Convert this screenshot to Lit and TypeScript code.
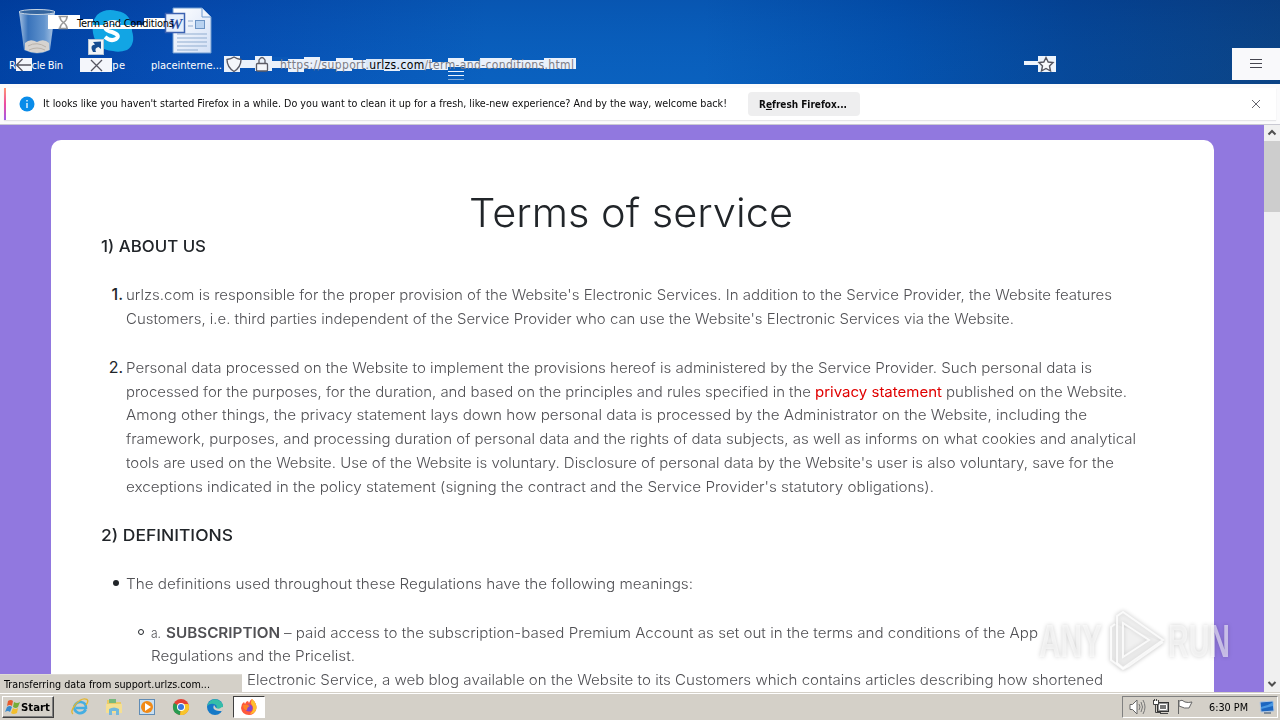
import { css, html, LitElement, svg } from "lit";
import { customElement, property } from "lit/decorators.js";

/** One line of text, stretched a little so that it fills the given width. */
@customElement("fit-line")
export class FitLine extends LitElement {
  @property({ type: Number })
  width = 0;

  firstUpdated() {
    const span = this.renderRoot.querySelector("span")!;
    const natural = span.getBoundingClientRect().width;
    if (this.width && natural) {
      span.style.transform = `scaleX(${this.width / natural})`;
    }
  }

  render() {
    return html`<span><slot></slot></span>`;
  }

  static styles = css`
    :host {
      display: block;
      flex: none;
      white-space: nowrap;
    }

    span {
      display: inline-block;
      vertical-align: top;
      transform-origin: 0 0;
    }
  `;
}

@customElement("desktop-strip")
export class DesktopStrip extends LitElement {
  render() {
    return html`
      <svg class="wall" width="1280" height="84" viewBox="0 0 1280 84">
        <defs>
          <linearGradient id="sky">
            <stop offset="0" stop-color="#003d9f" />
            <stop offset="0.13" stop-color="#0649b0" />
            <stop offset="0.38" stop-color="#0a5fbd" />
            <stop offset="0.55" stop-color="#0a5fbc" />
            <stop offset="0.7" stop-color="#0450ac" />
            <stop offset="0.84" stop-color="#064391" />
            <stop offset="1" stop-color="#0c3e7b" />
          </linearGradient>
          <linearGradient id="shade" x2="0" y2="1">
            <stop offset="0" stop-color="#003a90" stop-opacity="0.25" />
            <stop offset="1" stop-color="#0b6fd0" stop-opacity="0.12" />
          </linearGradient>
          <linearGradient id="glass">
            <stop offset="0" stop-color="#b8d0ea" />
            <stop offset="0.25" stop-color="#3e78bd" />
            <stop offset="0.7" stop-color="#6d9dd2" />
            <stop offset="1" stop-color="#c3d8ee" />
          </linearGradient>
          <linearGradient id="paper" x2="1" y2="1">
            <stop offset="0" stop-color="#ffffff" />
            <stop offset="1" stop-color="#d3e0f6" />
          </linearGradient>
        </defs>
        <rect width="1280" height="84" fill="url(#sky)" />
        <rect width="1280" height="84" fill="url(#shade)" />
        <path d="M19 12 L24 50 Q37 57 50 50 L55 12Z" fill="url(#glass)" opacity="0.9" />
        <path d="M25 43 Q30 38 37 42 Q44 38 49 43 L49 50 Q37 56 25 50Z" fill="#d6d3d0" />
        <path d="M28 46 Q37 41 46 47 M29 50 Q37 46 45 50" fill="none" stroke="#b9b2aa" />
        <ellipse cx="37" cy="12" rx="18" ry="2.5" fill="#34659f" stroke="#c9d7e5" />
        <path d="M97 15 Q105 8 117 11 Q132 13 132 31 Q136 44 127 50 Q119 53 113 51 Q96 50 93 33 Q91 22 97 15Z" fill="#12a5e4" />
        <path d="M120 24 Q113 20 107 24 Q102 30 112 32 Q121 35 116 39 Q111 42 105 37" fill="none" stroke="#fff" stroke-width="4" />
        <rect x="88.500" y="39.500" width="15" height="15" fill="#f2f5f8" stroke="#b8c6d5" />
        <path d="M93 52 Q89 45 95 44.500 L93 42 L101 41.500 L101 49 L98.500 47 Q94 48 96 52Z" fill="#174d91" />
        <path d="M173 8 H202 L211 17 V53 H173Z" fill="url(#paper)" stroke="#6e9bd0" />
        <path d="M202 8 V17 H211" fill="#edf3fc" stroke="#6e9bd0" />
        <path d="M188 21H193M188 26H193M177 34H207M177 38H207M177 42H207M177 46H207M177 50H198" stroke="#91add0" />
        <rect x="195.500" y="20.500" width="9" height="8" fill="#b8d2f0" stroke="#6c94c4" />
        <path d="M48 15H80V19H93V29H48ZM93 25H144V29H93ZM144 18H166V29H144Z" fill="#fff" />
        <rect x="165.500" y="13.500" width="19" height="19" fill="#e6effc" stroke="#3c62b1" stroke-width="1.500" />
        <text x="169" y="29" class="word">W</text>
        <path d="M58.500 16.500H68M58.500 28.500H68M60 17Q60 20 63.500 22.500Q60 25 60 28M67 17Q67 20 63.500 22.500Q67 25 67 28" fill="none" stroke="#999" stroke-width="1.500" />
        <text x="9" y="69" class="label" textLength="54">Recycle Bin</text>
        <text x="94" y="69" class="label" textLength="31">Skype</text>
        <text x="151" y="69" class="label" textLength="71">placeinterne...</text>
        <path d="M16 58H32V71H16ZM80 58H112V72H80Z" fill="#f4f6fb" />
        <path d="M31 65H17M22.500 59L16.500 65L22.500 71M91 60L102 71M102 60L91 71" fill="none" stroke="#555560" stroke-width="1.300" />
        <text x="77" y="27" class="tab" textLength="97">Term and Conditions</text>
        <path d="M224 56H240V60H255V56H272V61H288V59H304V57H320V61H336V58H353V60H370V61H384V60H415V59H432V62H448V58H464V61H480V58H512V60H544V58H576V69H544V68H464V67H448V70H432V69H415V68H400V71H384V69H352V71H336V69H304V72H288V68H272V71H255V68H240V72H224Z" fill="#eaf1fb" />
        <path d="M272 57H288V61H272ZM368 58H424V62H368ZM368 62H424V69H368Z" fill="#0a58b8" />
        <path d="M234 57Q237 59 241 59.500Q241 67 234 71.500Q227 67 227 59.500Q231 59 234 57Z" fill="#f4f6fb" stroke="#5b5b66" stroke-width="1.400" />
        <rect x="256.500" y="63.500" width="11" height="7.500" rx="1" fill="#f4f6fb" stroke="#5b5b66" stroke-width="1.300" />
        <path d="M259 63V60Q262 55 265 60V63" fill="none" stroke="#5b5b66" stroke-width="1.300" />
        <path d="M366 59H426V70H366Z" fill="#dbe8f8" />
        <text x="280" y="69" class="url" textLength="294"><tspan>https://support.</tspan><tspan class="host">urlzs.com</tspan><tspan>/term-and-conditions.html</tspan></text>
        <path d="M448 71.500H464M448 75.500H464" stroke="#edf5ff" />
        <path d="M448 79.500H464" stroke="#7eaad9" />
        <path d="M1024 61H1038V56H1056V72H1038V65H1024Z" fill="#edf4fc" />
        <path d="M1046 57.500L1048.200 62L1053 62.600L1049.500 66L1050.500 71L1046 68.500L1041.500 71L1042.500 66L1039 62.600L1043.800 62Z" fill="#f8f9fb" stroke="#55555f" stroke-width="1.400" />
        <rect x="1232" y="48" width="48" height="32" fill="#f9f9fb" />
        <path d="M1250 59.500H1262M1250 63.500H1262M1250 67.500H1262" stroke="#45454f" />
      </svg>
    `;
  }

  static styles = css`
    :host {
      display: block;
      height: 84px;
    }

    .wall {
      display: block;
      font-family: "DejaVu Sans Condensed", "DejaVu Sans", sans-serif;
      font-stretch: condensed;
      font-size: 11px;
    }

    .label {
      fill: #fff;
    }

    .tab,
    .host {
      fill: #000;
    }

    .url {
      fill: #7d7d86;
      font-size: 12px;
    }

    .word {
      fill: #294d9d;
      font: italic bold 15px "Liberation Serif", serif;
    }
  `;
}

@customElement("notification-bar")
export class NotificationBar extends LitElement {
  render() {
    return html`
      <div class="bar">
        <svg class="info" width="16" height="16" viewBox="0 0 16 16">
          <circle cx="8" cy="8" r="7.500" fill="#0a8ce9" />
          <path d="M8 4V5.500M8 7V12" stroke="#fff" stroke-width="1.300" />
        </svg>
        <fit-line class="message" width="684">It looks like you haven't started Firefox in a while. Do you want to clean it up for a fresh, like-new experience? And by the way, welcome back!</fit-line>
        <div class="button"><fit-line width="88">R<u>e</u>fresh Firefox...</fit-line></div>
        <svg class="close" width="10" height="10" viewBox="0 0 10 10">
          <path d="M1 1L9 9M9 1L1 9" stroke="#66666e" />
        </svg>
      </div>
    `;
  }

  static styles = css`
    :host {
      display: block;
      box-sizing: border-box;
      height: 41px;
      padding: 4px 4px 4px;
      background: #fbfbfc;
      border-bottom: 1px solid #c9c9d2;
    }

    .bar {
      display: flex;
      align-items: center;
      box-sizing: border-box;
      height: 32px;
      padding: 0 15px 0 13px;
      background: #fff;
      border-left: 2px solid;
      border-image: linear-gradient(#ff9b70, #ed4aa0, #9b5bec) 1;
      box-shadow: 0 1px 1px #e5e5e8;
      font-family: "DejaVu Sans Condensed", "DejaVu Sans", sans-serif;
      font-stretch: condensed;
      font-size: 11px;
      color: #0c0c0d;
    }

    .message {
      width: 684px;
      margin-left: 8px;
      line-height: 13px;
      padding-bottom: 1px;
    }

    .button {
      box-sizing: border-box;
      width: 112px;
      height: 24px;
      margin-left: 21px;
      padding-left: 11px;
      border-radius: 4px;
      background: #eeeeef;
      font-weight: bold;
      font-size: 10.500px;
      line-height: 24px;
    }

    .close {
      margin-left: auto;
    }
  `;
}

@customElement("terms-page")
export class TermsPage extends LitElement {
  render() {
    return html`
      <article class="card">
        <h1><fit-line width="324">Terms of service</fit-line></h1>
        <h2><fit-line width="105">1) ABOUT US</fit-line></h2>
        <div class="item">
          <span class="marker strong">1.</span>
          <div>
            <fit-line width="986">urlzs.com is responsible for the proper provision of the Website's Electronic Services. In addition to the Service Provider, the Website features</fit-line>
            <fit-line width="888">Customers, i.e. third parties independent of the Service Provider who can use the Website's Electronic Services via the Website.</fit-line>
          </div>
        </div>
        <div class="item">
          <span class="marker">2.</span>
          <div>
            <fit-line width="966">Personal data processed on the Website to implement the provisions hereof is administered by the Service Provider. Such personal data is</fit-line>
            <div class="row">
              <fit-line class="before" width="685">processed for the purposes, for the duration, and based on the principles and rules specified in the</fit-line>
              <fit-line class="link" width="127">privacy statement</fit-line>
              <fit-line width="181">published on the Website.</fit-line>
            </div>
            <fit-line width="961">Among other things, the privacy statement lays down how personal data is processed by the Administrator on the Website, including the</fit-line>
            <fit-line width="1010">framework, purposes, and processing duration of personal data and the rights of data subjects, as well as informs on what cookies and analytical</fit-line>
            <fit-line width="988">tools are used on the Website. Use of the Website is voluntary. Disclosure of personal data by the Website's user is also voluntary, save for the</fit-line>
            <fit-line width="808">exceptions indicated in the policy statement (signing the contract and the Service Provider's statutory obligations).</fit-line>
          </div>
        </div>
        <h2><fit-line width="132">2) DEFINITIONS</fit-line></h2>
        <div class="item">
          <span class="marker"><i class="disc"></i></span>
          <fit-line width="567">The definitions used throughout these Regulations have the following meanings:</fit-line>
        </div>
        <div class="item nested">
          <span class="marker"><i class="ring"></i></span>
          <div>
            <div class="row">
              <fit-line class="letter" width="10">a.</fit-line>
              <fit-line class="term" width="114">SUBSCRIPTION</fit-line>
              <fit-line width="754">– paid access to the subscription-based Premium Account as set out in the terms and conditions of the App</fit-line>
            </div>
            <fit-line width="204">Regulations and the Pricelist.</fit-line>
            <fit-line class="tail" width="856">Electronic Service, a web blog available on the Website to its Customers which contains articles describing how shortened</fit-line>
          </div>
        </div>
      </article>
    `;
  }

  static styles = css`
    :host {
      display: block;
      box-sizing: border-box;
      width: 1264px;
      height: 567px;
      padding: 15px 50px 0 51px;
      overflow: hidden;
      background: #9178df;
      font-family: Inter, "Open Sans", sans-serif;
      font-size: 14.300px;
      font-weight: 300;
      line-height: 23.850px;
      color: #505054;
    }

    .card {
      box-sizing: border-box;
      height: 700px;
      padding: 49px 50px 0 50px;
      border-radius: 10px;
      background: #fff;
    }

    h1 {
      width: 324px;
      height: 46px;
      margin: 0 0 0 368px;
      font-size: 40px;
      font-weight: 300;
      line-height: 48px;
      color: #212529;
    }

    h2 {
      margin: 0 0 28px;
      padding-top: 2px;
      font-size: 16px;
      font-weight: 500;
      line-height: 18px;
      color: #212529;
    }

    .item {
      display: flex;
      margin-bottom: 25px;
    }

    .marker {
      flex: none;
      width: 22px;
      margin-right: 3px;
      text-align: right;
      font-size: 16px;
      font-weight: 400;
      color: #212529;
    }

    .strong {
      font-weight: 500;
    }

    .nested {
      padding-left: 25px;
    }

    .disc,
    .ring {
      display: inline-block;
      box-sizing: border-box;
      width: 6px;
      height: 6px;
      margin: 0 4px 3px 0;
      border-radius: 50%;
      background: #212529;
      vertical-align: middle;
    }

    .ring {
      border: 1px solid #212529;
      background: none;
    }

    .row {
      display: flex;
      gap: 5px;
    }

    .before {
      width: 684px;
    }

    .link {
      width: 126px;
      color: #e00000;
      font-weight: 400;
    }

    .letter {
      width: 10px;
    }

    .term {
      width: 113px;
      font-weight: 600;
    }

    .tail {
      margin-left: 96px;
    }
  `;
}

@customElement("page-scrollbar")
export class PageScrollbar extends LitElement {
  render() {
    return html`
      <svg width="16" height="16" viewBox="0 0 16 16">
        <path d="M4.500 9.500L8 6L11.500 9.500" fill="none" stroke="#505050" stroke-width="2" />
      </svg>
      <div class="thumb"></div>
      <svg class="down" width="16" height="17" viewBox="0 0 16 17">
        <path d="M4.500 7L8 10.500L11.500 7" fill="none" stroke="#505050" stroke-width="2" />
      </svg>
    `;
  }

  static styles = css`
    :host {
      display: flex;
      flex-direction: column;
      width: 16px;
      background: #f0f0f0;
    }

    .thumb {
      height: 71px;
      background: #cdcdcd;
    }

    .down {
      margin-top: auto;
    }
  `;
}

@customElement("task-bar")
export class TaskBar extends LitElement {
  private icons = [
    svg`<path d="M15.800 12.500Q13 17 8.500 16Q3.500 14 4.500 9Q6.500 4.500 11 5Q16.500 6 16 11H6" fill="none" stroke="#45aee2" stroke-width="2.600" />
      <path d="M3 17Q0 15 5 8Q12 0 17 2.500Q19 4 16 8" fill="none" stroke="#e3b632" stroke-width="1.400" />`,
    svg`<path d="M3 3H8L9 5H17V16H3Z" fill="#eacb67" /><path d="M5 2H12V6H5Z" fill="#78b97c" />
      <path d="M2 7H18V16H2Z" fill="#f5df91" /><path d="M5 18V12Q10 9 15 12V18H12V14H8V18Z" fill="#73b8dc" />`,
    svg`<rect x="1.500" y="2.500" width="15" height="15" fill="#c9dff1" stroke="#608cb5" />
      <circle cx="9" cy="10" r="6" fill="#f18a16" /><path d="M7 6L13 10L7 14Z" fill="#fff" />`,
    svg`<circle cx="10" cy="10" r="8" fill="#e44134" /><path d="M10 10L3 6A8 8 0 0 0 9 18Z" fill="#279b50" />
      <path d="M10 10L9 18A8 8 0 0 0 17.500 7H10Z" fill="#f8c52b" /><circle cx="10" cy="10" r="4" fill="#fff" /><circle cx="10" cy="10" r="3" fill="#3978df" />`,
    svg`<circle cx="10" cy="10" r="8" fill="#1579c7" /><path d="M2 9Q5 1 12 2.500Q19 5 18 11Q15 14 11 12Q13 8 9 7Q5 6 2 9Z" fill="#35bda8" />
      <path d="M9 8Q6 14 17 14Q20 10 17 10Q14 13 11 11Z" fill="#d4d0c8" />`,
  ];

  render() {
    return html`
      <div class="start">
        <svg width="16" height="16" viewBox="0 0 16 16">
          <path d="M3 2Q6 0 8 2L7 7Q5 5 2 7Z" fill="#e65a2c" />
          <path d="M9 3Q12 5 15 3L13 8Q11 10 8 8Z" fill="#75ac38" />
          <path d="M2 8Q5 6 7 8L5 13Q3 11 0 13Z" fill="#398acd" />
          <path d="M8 9Q10 11 13 9L12 14Q8 16 6 14Z" fill="#f2be2c" />
        </svg>
        <fit-line width="29">Start</fit-line>
      </div>
      <div class="icons">
        ${this.icons.map((icon) => html`<svg width="20" height="20" viewBox="0 0 20 20">${icon}</svg>`)}
      </div>
      <div class="active">
        <svg width="18" height="18" viewBox="0 0 18 18">
          <path d="M2 6L4 4L5 6Q6 3 8 3L9 5Q10 2 12 1Q18 6 16 12Q14 17 9 17Q2 17 1 10Z" fill="#ff5a3c" />
          <path d="M12 1Q18 6 16 12Q14 16 10 16Q15 12 12 7Q10 5 12 1Z" fill="#ffc02e" />
          <circle cx="9" cy="10" r="3.500" fill="#8647cf" />
          <path d="M3 7Q7 6 10 8Q7 9 7 12Q3 12 3 7Z" fill="#ff8427" />
        </svg>
      </div>
      <div class="tray">
        <svg width="68" height="20" viewBox="0 0 68 20">
          <path d="M2 7.500H4.500L9 3V17L4.500 12.500H2Z" fill="#fff" stroke="#666" />
          <path d="M11 7Q13 10 11 13M13 5Q16 10 13 15M15 3Q19 10 15 17" fill="none" stroke="#777" />
          <rect x="29.500" y="5.500" width="11" height="9" fill="#929292" stroke="#333" />
          <path d="M31.500 7.500H38.500V12.500H31.500Z" fill="#777" stroke="#fff" />
          <path d="M25.500 3V7.500H30.500V3M26.500 2V5M28.500 2V5M27.500 8V15.500H33M32 16.500H40" fill="none" stroke="#444" />
          <path d="M26 4H30V7H26Z" fill="#fff" />
          <path d="M50.500 17V3M51 4Q54 2 57 5Q60 6 64 5L61 11Q57 12 51 9Z" fill="#fff" stroke="#666" />
        </svg>
        <fit-line class="clock" width="39">6:30 PM</fit-line>
        <svg width="16" height="14" viewBox="0 0 16 14">
          <path d="M1 2L14 1L15 11L2 12Z" fill="#1c66c0" stroke="#b3c7df" />
          <path d="M2 7Q9 6 14 2V6L2 9Z" fill="#4a98e2" />
          <path d="M5 13H12" stroke="#28466b" />
        </svg>
      </div>
    `;
  }

  static styles = css`
    :host {
      display: flex;
      align-items: center;
      box-sizing: border-box;
      height: 28px;
      padding: 1px 2px 0 2px;
      border-top: 1px solid #d4d0c8;
      box-shadow: inset 0 1px #fff;
      background: #d4d0c8;
      font-family: "DejaVu Sans Condensed", "DejaVu Sans", sans-serif;
      font-stretch: condensed;
      font-size: 11px;
      color: #000;
    }

    .start {
      display: flex;
      align-items: center;
      box-sizing: border-box;
      width: 52px;
      height: 22px;
      padding-left: 2px;
      border: 1px solid;
      border-color: #fff #404040 #404040 #fff;
      box-shadow: inset -1px -1px #808080;
      font-weight: bold;
    }

    .icons {
      display: flex;
      gap: 13.800px;
      margin-left: 16px;
    }

    .active {
      display: flex;
      align-items: center;
      justify-content: center;
      box-sizing: border-box;
      width: 32px;
      height: 22px;
      margin-left: 8px;
      border: 1px solid;
      border-color: #404040 #fff #fff #404040;
      background: #fff;
    }

    .tray {
      display: flex;
      align-items: center;
      box-sizing: border-box;
      width: 156px;
      height: 22px;
      margin-left: auto;
      padding-left: 5px;
      border: 1px solid;
      border-color: #808080 #fff #fff #808080;
    }

    .clock {
      width: 40px;
      margin: 0 10px 0 13px;
    }
  `;
}

@customElement("app-root")
export class AppRoot extends LitElement {
  render() {
    return html`
      <desktop-strip></desktop-strip>
      <notification-bar></notification-bar>
      <div class="content">
        <terms-page></terms-page>
        <page-scrollbar></page-scrollbar>
      </div>
      <task-bar></task-bar>
      <div class="status"><fit-line width="206">Transferring data from support.urlzs.com...</fit-line></div>
      <svg class="watermark" width="210" height="66" viewBox="0 0 210 66">
        <text x="4" y="48" textLength="63" lengthAdjust="spacingAndGlyphs">ANY</text>
        <path d="M80 15L76 18V51L88 60L94 57L128 33" />
        <path d="M82 54V7L88 3L128 31L88 59Z M88 14V48L114 31Z" />
        <text x="133" y="48" textLength="62" lengthAdjust="spacingAndGlyphs">RUN</text>
      </svg>
    `;
  }

  static styles = css`
    :host {
      display: flex;
      flex-direction: column;
      position: relative;
      width: 1280px;
      height: 720px;
      overflow: hidden;
    }

    .content {
      display: flex;
      height: 567px;
    }

    .status {
      position: absolute;
      left: 0;
      bottom: 28px;
      box-sizing: border-box;
      width: 242px;
      height: 18px;
      padding-left: 4px;
      background: #d4d0c8;
      border-top: 1px solid #dedbd5;
      font: 11px/19px "DejaVu Sans Condensed", "DejaVu Sans", sans-serif;
      font-stretch: condensed;
      color: #000;
    }

    .watermark {
      position: absolute;
      left: 1035px;
      top: 609px;
      overflow: visible;
      fill: rgba(255, 255, 255, 0.55);
      filter: drop-shadow(0 0 2px rgba(0, 0, 0, 0.32));
      font: bold 46px "Liberation Sans", sans-serif;
    }

    .watermark path {
      fill: rgba(255, 255, 255, 0.25);
      stroke: rgba(255, 255, 255, 0.8);
      stroke-width: 2;
    }
  `;
}

declare global {
  interface HTMLElementTagNameMap {
    "app-root": AppRoot;
  }
}
